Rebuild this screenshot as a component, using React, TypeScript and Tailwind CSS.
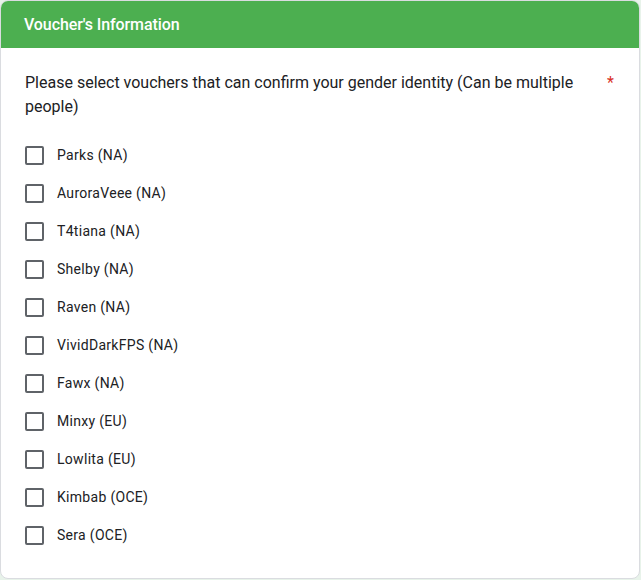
import { FC } from 'react';

const vouchers = [
  'Parks (NA)',
  'AuroraVeee (NA)',
  'T4tiana (NA)',
  'Shelby (NA)',
  'Raven (NA)',
  'VividDarkFPS (NA)',
  'Fawx (NA)',
  'Minxy (EU)',
  'Lowlita (EU)',
  'Kimbab (OCE)',
  'Sera (OCE)',
];

const CheckRow: FC<{ label: string }> = ({ label }) => (
  <label className="flex items-center gap-[13px] h-[38px] cursor-pointer">
    <span className="w-[19px] h-[19px] border-2 border-[#5f6368] rounded-[2px] shrink-0" />
    <span className="text-sm tracking-[0.3px] text-[#202124]">{label}</span>
  </label>
);

export default function App() {
  return (
    <div className="min-h-[580px] bg-[#e8f3ea]" style={{ fontFamily: 'Roboto, "Liberation Sans", sans-serif' }}>
      <div className="w-[640px] h-[579px] bg-white border border-[#dadce0] rounded-lg overflow-hidden">
        <div className="h-[47px] bg-[#4caf50] px-[23px] flex items-center text-white text-base font-medium tracking-[-0.1px]">
          Voucher&apos;s Information
        </div>
        <div className="px-6 pt-[23px] pb-6">
          <div className="flex items-start">
            <p className="flex-1 text-base leading-6 text-[#202124] pr-[20px]">
              Please select vouchers that can confirm your gender identity (Can be multiple people)
            </p>
            <span className="text-[#d93025] text-base leading-6 pr-[1px]">*</span>
          </div>
          <div className="mt-[17px] flex flex-col">
            {vouchers.map((v) => (
              <CheckRow key={v} label={v} />
            ))}
          </div>
        </div>
      </div>
    </div>
  );
}
